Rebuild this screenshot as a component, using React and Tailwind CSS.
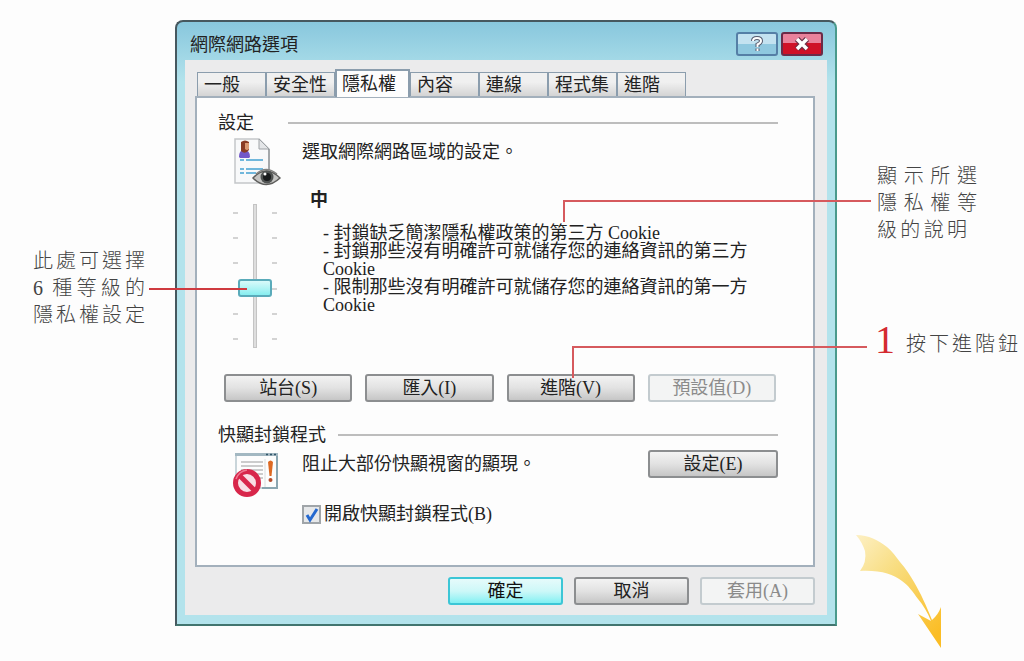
import React, { useState } from "react";

const TABS = ["一般", "安全性", "隱私權", "內容", "連線", "程式集", "進階"];
const TICKS = [5, 4, 3, 2, 1, 0];

const BUTTON_STYLES = {
  normal:
    "border-[#8c8e90] bg-linear-to-b from-[#f3f3f3] via-[#e2e2e2] via-50% to-[#c6c6c6] text-[#222]",
  primary:
    "border-[#3cc6d6] bg-linear-to-b from-[#e6fbfb] via-[#cdf8f8] via-50% to-[#7ff0f2] text-[#111]",
  disabled: "border-[#c3cbcf] bg-[#f3f4f4] text-[#8b8b8b]",
};

const WinButton = ({ children, variant = "normal", className = "" }) => (
  <button
    type="button"
    disabled={variant === "disabled"}
    className={`h-7 rounded-[3px] border-2 text-center leading-6 ${BUTTON_STYLES[variant]} ${className}`}
  >
    {children}
  </button>
);

const SectionTitle = ({ children, gap = "gap-4" }) => (
  <div className={`flex h-6 items-center ${gap}`}>
    <h2 className="leading-6">{children}</h2>
    <div className="h-0.5 flex-1 bg-[#bdbdbd]"></div>
  </div>
);

const PrivacyIcon = () => (
  <svg width="48" height="50" viewBox="0 0 48 50" aria-hidden="true">
    <path d="M2 1H26L36 11V45H2Z" fill="#f8f9fa" stroke="#c3c6c9" strokeWidth="1.5" />
    <path d="M26 1V11H36Z" fill="#e4e6e8" stroke="#9ea2a6" />
    <path d="M36 11V32" stroke="#777c80" />
    <path d="M6 19Q6 12 11 12Q17 12 17 19L16 20H7Z" fill="#7257c9" />
    <path d="M8 4Q12 1 16 4V12Q12 17 8 13Z" fill="#8a3b25" />
    <path d="M12 5H16V11Q14 13 12 11Z" fill="#dc9a74" />
    <path d="M7 22H11M13 22H30M7 31H11M13 31H30M7 35H11M13 35H23" stroke="#70b7dc" strokeWidth="2" />
    <path d="M20 40Q33 26 47 40Q33 53 20 40Z" fill="#c4c4c2" stroke="#5e5e5c" strokeWidth="1.5" />
    <path d="M23 36Q33 27 44 36" stroke="#838381" strokeWidth="1.5" fill="none" />
    <circle cx="34" cy="39" r="6.5" fill="#505352" />
    <circle cx="34" cy="39" r="4" fill="#191b1c" />
    <circle cx="32" cy="36" r="1.5" fill="#fff" />
  </svg>
);

const PopupIcon = () => (
  <svg width="48" height="48" viewBox="0 0 48 48" aria-hidden="true">
    <path d="M4 2H45V36H4Z" fill="#fdfdfd" stroke="#b8c8ce" strokeWidth="1.5" />
    <path d="M3 1H46V4H3Z" fill="#a3b8c2" />
    <path d="M34 2.5H36M38 2.5H40M42 2.5H44" stroke="#31556a" strokeWidth="1.5" />
    <path d="M45 4V36H30" fill="none" stroke="#8ba6b1" strokeWidth="2" />
    <path d="M9 10H31M9 14H31M9 18H31M9 22H31M24 26H31" stroke="#bcbcbc" strokeWidth="1.5" />
    <path d="M33 7V35" stroke="#d9dddf" />
    <path d="M36 10Q38.500 7 41 10L39.500 24H37.500Z" fill="#dd6a24" />
    <circle cx="38.500" cy="28" r="2" fill="#b64c2c" />
    <circle cx="15" cy="31" r="11.500" fill="#f8dfe5" stroke="#d8274b" strokeWidth="5" />
    <path d="M7 23L23 39" stroke="#d8274b" strokeWidth="5" />
    <path d="M4 27Q7 19 15 18" stroke="#ee7890" strokeWidth="1.5" fill="none" />
  </svg>
);

const CurvedArrow = () => (
  <svg width="88" height="118" viewBox="0 0 88 118" aria-hidden="true">
    <defs>
      <linearGradient id="arrowFill" x1="0" y1="0" x2="0.8" y2="1">
        <stop offset="0" stopColor="#fdf0c4" />
        <stop offset="0.4" stopColor="#f8dd80" />
        <stop offset="1" stopColor="#fbbd25" />
      </linearGradient>
    </defs>
    <path
      d="M0 0C13 0 22 5 31 12C37 17 40 22 44 27C50 34 54 40 58 47C65 59 70 70 76 85Q82 80 85 72V113L62 79L75 86C72 78 67 70 62 64C57 57 52 50 46 46C37 39 24 35 4 36Q11 27 9 16Q6 7 0 0Z"
      fill="url(#arrowFill)"
    />
  </svg>
);

const PrivacySlider = () => {
  const [level, setLevel] = useState(2);

  return (
    <div className="flex h-36 w-11 justify-between">
      <div className="flex flex-col justify-between py-2">
        {TICKS.map((tick) => (
          <span key={tick} className="h-0.5 w-[5px] bg-[#d3d3d3]"></span>
        ))}
      </div>
      <input
        type="range"
        min="0"
        max="5"
        aria-label="隱私權等級"
        value={level}
        onChange={(e) => setLevel(Number(e.target.value))}
        className="h-36 w-1 appearance-none bg-transparent [direction:rtl] [writing-mode:vertical-lr] [&::-webkit-slider-runnable-track]:w-1 [&::-webkit-slider-runnable-track]:border [&::-webkit-slider-runnable-track]:border-[#c4c4c4] [&::-webkit-slider-runnable-track]:bg-[#dedede] [&::-webkit-slider-thumb]:-ml-4 [&::-webkit-slider-thumb]:h-[18px] [&::-webkit-slider-thumb]:w-[34px] [&::-webkit-slider-thumb]:appearance-none [&::-webkit-slider-thumb]:rounded-[3px] [&::-webkit-slider-thumb]:border-2 [&::-webkit-slider-thumb]:border-[#5aabba] [&::-webkit-slider-thumb]:bg-linear-to-b [&::-webkit-slider-thumb]:from-[#d8fafa] [&::-webkit-slider-thumb]:to-[#86eef0]"
      />
      <div className="flex flex-col justify-between py-2">
        {TICKS.map((tick) => (
          <span key={tick} className="h-0.5 w-[5px] bg-[#d3d3d3]"></span>
        ))}
      </div>
    </div>
  );
};

const TitleBar = () => (
  <header className="flex h-[38px] items-center justify-between pr-3 pl-[13px]">
    <h1 className="pt-2 leading-6">網際網路選項</h1>
    <div className="flex gap-[3px] pt-1.5">
      <button
        type="button"
        aria-label="說明"
        className="flex h-6 w-[42px] items-center justify-center rounded-[3px] border-2 border-[#557fa6] bg-linear-to-b from-[#c3e2f0] from-50% to-[#8fc8df] to-50%"
      >
        <svg width="14" height="18" viewBox="0 0 14 18" fill="none" aria-hidden="true">
          <path d="M3 6Q3 3 7 3Q11 3 11 6Q11 8 7.5 9.500V12M7.5 13.500V16" stroke="#54596c" strokeWidth="4" />
          <path d="M3 6Q3 3 7 3Q11 3 11 6Q11 8 7.5 9.500V12M7.5 13.500V16" stroke="#fff" strokeWidth="2" />
        </svg>
      </button>
      <button
        type="button"
        aria-label="關閉"
        className="flex h-6 w-[42px] items-center justify-center rounded-[3px] border-2 border-[#6b2b48] bg-linear-to-b from-[#e9829b] from-45% to-[#cf1127] to-45%"
      >
        <svg width="16" height="16" viewBox="0 0 16 16" fill="none" aria-hidden="true">
          <path d="M3 3L13 13M13 3L3 13" stroke="#6a3148" strokeWidth="6" />
          <path d="M3 3L13 13M13 3L3 13" stroke="#fff" strokeWidth="3.5" />
        </svg>
      </button>
    </div>
  </header>
);

const TabStrip = ({ active, onSelect }) => (
  <div role="tablist" className="relative z-10 -mb-px ml-0.5 flex h-7 items-end">
    {TABS.map((tab) => (
      <button
        key={tab}
        type="button"
        role="tab"
        aria-selected={tab === active}
        onClick={() => onSelect(tab)}
        className={
          tab === active
            ? "h-7 w-[75px] border-2 border-b-0 border-[#8b9dad] bg-[#fdfdfd] pl-[5px] text-left leading-6"
            : "mb-px h-6 w-[69px] border border-b-0 border-[#8b9dad] bg-linear-to-b from-[#f0f0f0] from-40% to-[#d4d4d4] pl-1.5 text-left leading-6"
        }
      >
        {tab}
      </button>
    ))}
  </div>
);

const PrivacyPanel = () => {
  const [blockPopups, setBlockPopups] = useState(true);

  return (
    <div role="tabpanel" className="border-2 border-[#a3b0bc] bg-[#fdfdfd] pt-[13px] pr-[35px] pb-[39px] pl-[21px]">
      <SectionTitle gap="gap-[34px]">設定</SectionTitle>
      <div className="flex">
        <div className="w-[84px] shrink-0 pt-[3px] pl-[15px]">
          <PrivacyIcon />
          <div className="pt-4">
            <PrivacySlider />
          </div>
        </div>
        <div className="flex-1 pt-[5px]">
          <p className="leading-6">選取網際網路區域的設定。</p>
          <h3 className="mt-6 pl-2 leading-6 font-bold">中</h3>
          <p className="mt-3 pl-[21px] leading-[18px] whitespace-nowrap">
            - 封鎖缺乏簡潔隱私權政策的第三方 Cookie
            <br />
            - 封鎖那些沒有明確許可就儲存您的連絡資訊的第三方
            <br />
            Cookie
            <br />
            - 限制那些沒有明確許可就儲存您的連絡資訊的第一方
            <br />
            Cookie
          </p>
        </div>
      </div>

      {/* Botones de la sección */}
      <div className="mt-[26px] mr-0.5 ml-1.5 grid grid-cols-4 gap-[13px]">
        <WinButton>站台(S)</WinButton>
        <WinButton>匯入(I)</WinButton>
        <WinButton>進階(V)</WinButton>
        <WinButton variant="disabled">預設值(D)</WinButton>
      </div>

      <div className="mt-[21px]">
        <SectionTitle gap="gap-3">快顯封鎖程式</SectionTitle>
      </div>
      <div className="flex">
        <div className="w-[84px] shrink-0 pt-[5px] pl-3.5">
          <PopupIcon />
        </div>
        <div className="flex-1">
          <div className="flex items-center justify-between pt-[3px]">
            <p className="leading-6">阻止大部份快顯視窗的顯現。</p>
            <WinButton className="w-[130px]">設定(E)</WinButton>
          </div>
          <label className="mt-6 flex items-center gap-[3px] leading-6">
            <span className="relative size-[19px]">
              <input
                type="checkbox"
                checked={blockPopups}
                onChange={(e) => setBlockPopups(e.target.checked)}
                className="block size-[19px] appearance-none border-2 border-[#a0a5a9] bg-[#e6e8ea]"
              />
              {blockPopups && (
                <svg className="pointer-events-none absolute inset-0" width="19" height="19" viewBox="0 0 19 19" fill="none" aria-hidden="true">
                  <path d="M5 10L8 15L15 4" stroke="#2468cf" strokeWidth="3" />
                </svg>
              )}
            </span>
            開啟快顯封鎖程式(B)
          </label>
        </div>
      </div>
    </div>
  );
};

const OptionsDialog = () => {
  const [active, setActive] = useState("隱私權");

  return (
    <section className="relative min-w-0 flex-1 rounded-t-lg border-2 border-[#46585f] border-r-[#4a9a8c] border-b-[#42756f] bg-linear-to-b from-[#88c7dd] to-[#b3e3ec] to-[60px] text-lg text-[#222]">
      <TitleBar />
      <div className="mx-2 mb-[9px] bg-[#ebebec] pt-[9px] pr-3 pb-2.5 pl-2.5">
        <TabStrip active={active} onSelect={setActive} />
        <PrivacyPanel />
        <div className="mt-2.5 flex justify-end gap-[11px]">
          <WinButton variant="primary" className="w-[115px]">確定</WinButton>
          <WinButton className="w-[115px]">取消</WinButton>
          <WinButton variant="disabled" className="w-[115px]">套用(A)</WinButton>
        </div>
      </div>

      {/* Líneas de las notas, por encima del diálogo */}
      <div className="pointer-events-none absolute top-[266px] -left-7 h-0.5 w-[98px] bg-[#cf3a40]"></div>
      <div className="pointer-events-none absolute top-[178px] -right-9 h-[22px] w-[308px] border-t-2 border-l-2 border-[#d65a5e]"></div>
      <div className="pointer-events-none absolute top-[324px] -right-8 h-8 w-[295px] border-t-2 border-l-2 border-[#d65a5e]"></div>
    </section>
  );
};

const App = () => (
  <main
    lang="zh-Hant"
    className="flex min-h-screen items-start bg-[#fdfdfd] pt-5 font-['Liberation_Serif','Noto_Sans_CJK_TC',serif]"
  >
    <aside className="w-[175px] shrink-0 pt-[228px] pl-[33px]">
      <div className="w-28 text-xl leading-[27px] font-light text-[#444] [text-align-last:justify]">
        <p>此處可選擇</p>
        <p>6 種等級的</p>
        <p>隱私權設定</p>
      </div>
    </aside>

    <OptionsDialog />

    <aside className="w-[187px] shrink-0 pt-[143px]">
      <div className="ml-10 w-[100px] text-xl leading-[27px] font-light text-[#444] [text-align-last:justify]">
        <p>顯示所選</p>
        <p>隱私權等</p>
        <p className="w-[90px]">級的說明</p>
      </div>
      <div className="mt-[76px] ml-[38px] flex h-10 items-center gap-[11px]">
        <span className="text-[40px] leading-10 text-[#d42a30]">1</span>
        <p className="w-28 pt-2 text-xl leading-[27px] font-light text-[#444] [text-align-last:justify]">
          按下進階鈕
        </p>
      </div>
      <div className="mt-[175px] ml-[19px]">
        <CurvedArrow />
      </div>
    </aside>
  </main>
);

export default App;
